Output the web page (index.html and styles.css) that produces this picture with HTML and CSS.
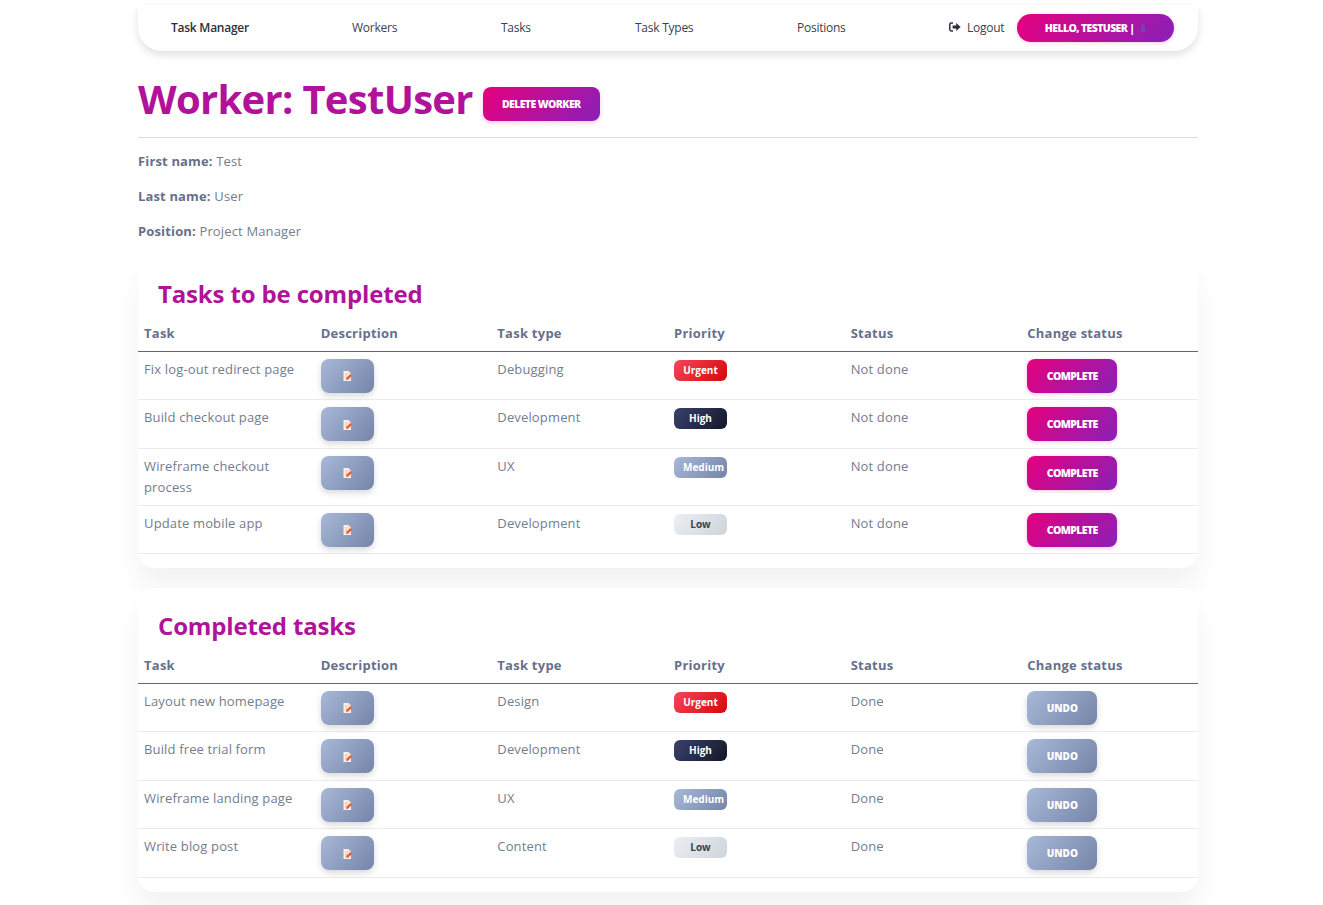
FILE: index.html
```html
<!DOCTYPE html>
<html lang="en">
<head>
    <meta charset="UTF-8">
    <meta name="viewport" content="width=device-width, initial-scale=1.0">
    <title>Worker: TestUser</title>
    <link rel="stylesheet" href="styles.css">
</head>
<body>
    <svg class="icon_defs">
        <symbol id="memo" viewBox="0 0 9 10">
            <path d="M.5 0h5L8 2.5V10H.5z" fill="#fbeee6"/>
            <path d="M5.5 0v2.5H8" fill="#f3cdb8"/>
            <path d="M2 3h3M2 5h2M2 7h1.5" stroke="#eab39c" stroke-width=".8"/>
            <path d="M3 9l.6-2.4L7.3 3 9 4.7 5.4 8.4z" fill="#e4603a"/>
        </symbol>
    </svg>

    <div class="container">
        <nav class="navbar">
            <a class="brand" href="#">Task Manager</a>
            <a class="nav_link" href="#">Workers</a>
            <a class="nav_link" href="#">Tasks</a>
            <a class="nav_link" href="#">Task Types</a>
            <a class="nav_link" href="#">Positions</a>
            <a class="logout" href="#">
                <svg class="logout_icon" viewBox="0 0 12 10"><path d="M4 1H2.2C1.3 1 .8 1.6.8 2.4v5.2C.8 8.4 1.3 9 2.2 9H4" fill="none" stroke="#2b2f3a" stroke-width="1.5"/><path d="M3.6 3.6h3.6V1l4.4 4-4.4 4V6.4H3.6z" fill="#2b2f3a"/></svg>
                Logout
            </a>
            <a class="btn btn_pill" href="#">Hello, TestUser | <svg class="hello_icon" viewBox="0 0 6 8"><circle cx="3" cy="2" r="2" fill="#7a3fb0"/><path d="M0 8c0-3 1-4 3-4s3 1 3 4z" fill="#7a3fb0"/></svg></a>
        </nav>

        <div class="page_title">
            <h1>Worker: TestUser</h1>
            <a class="btn btn_delete" href="#">Delete worker</a>
        </div>
        <hr>

        <p class="detail"><b>First name:</b> Test</p>
        <p class="detail"><b>Last name:</b> User</p>
        <p class="detail"><b>Position:</b> Project Manager</p>

        <section class="card">
            <h2>Tasks to be completed</h2>
            <table>
                <thead>
                    <tr><th>Task</th><th>Description</th><th>Task type</th><th>Priority</th><th>Status</th><th>Change status</th></tr>
                </thead>
                <tbody>
                    <tr>
                        <td>Fix log-out redirect page</td>
                        <td><a class="btn btn_desc" href="#"><svg class="memo"><use href="#memo"/></svg></a></td>
                        <td>Debugging</td>
                        <td><span class="badge urgent">Urgent</span></td>
                        <td>Not done</td>
                        <td><a class="btn btn_complete" href="#">Complete</a></td>
                    </tr>
                    <tr>
                        <td>Build checkout page</td>
                        <td><a class="btn btn_desc" href="#"><svg class="memo"><use href="#memo"/></svg></a></td>
                        <td>Development</td>
                        <td><span class="badge high">High</span></td>
                        <td>Not done</td>
                        <td><a class="btn btn_complete" href="#">Complete</a></td>
                    </tr>
                    <tr>
                        <td>Wireframe checkout process</td>
                        <td><a class="btn btn_desc" href="#"><svg class="memo"><use href="#memo"/></svg></a></td>
                        <td>UX</td>
                        <td><span class="badge medium">Medium</span></td>
                        <td>Not done</td>
                        <td><a class="btn btn_complete" href="#">Complete</a></td>
                    </tr>
                    <tr>
                        <td>Update mobile app</td>
                        <td><a class="btn btn_desc" href="#"><svg class="memo"><use href="#memo"/></svg></a></td>
                        <td>Development</td>
                        <td><span class="badge low">Low</span></td>
                        <td>Not done</td>
                        <td><a class="btn btn_complete" href="#">Complete</a></td>
                    </tr>
                </tbody>
            </table>
        </section>

        <section class="card">
            <h2>Completed tasks</h2>
            <table>
                <thead>
                    <tr><th>Task</th><th>Description</th><th>Task type</th><th>Priority</th><th>Status</th><th>Change status</th></tr>
                </thead>
                <tbody>
                    <tr>
                        <td>Layout new homepage</td>
                        <td><a class="btn btn_desc" href="#"><svg class="memo"><use href="#memo"/></svg></a></td>
                        <td>Design</td>
                        <td><span class="badge urgent">Urgent</span></td>
                        <td>Done</td>
                        <td><a class="btn btn_undo" href="#">Undo</a></td>
                    </tr>
                    <tr>
                        <td>Build free trial form</td>
                        <td><a class="btn btn_desc" href="#"><svg class="memo"><use href="#memo"/></svg></a></td>
                        <td>Development</td>
                        <td><span class="badge high">High</span></td>
                        <td>Done</td>
                        <td><a class="btn btn_undo" href="#">Undo</a></td>
                    </tr>
                    <tr>
                        <td>Wireframe landing page</td>
                        <td><a class="btn btn_desc" href="#"><svg class="memo"><use href="#memo"/></svg></a></td>
                        <td>UX</td>
                        <td><span class="badge medium">Medium</span></td>
                        <td>Done</td>
                        <td><a class="btn btn_undo" href="#">Undo</a></td>
                    </tr>
                    <tr>
                        <td>Write blog post</td>
                        <td><a class="btn btn_desc" href="#"><svg class="memo"><use href="#memo"/></svg></a></td>
                        <td>Content</td>
                        <td><span class="badge low">Low</span></td>
                        <td>Done</td>
                        <td><a class="btn btn_undo" href="#">Undo</a></td>
                    </tr>
                </tbody>
            </table>
        </section>
    </div>
</body>
</html>
```

FILE: styles.css
```css
*{
    margin: 0;
    padding: 0;
    box-sizing: border-box;
}

body{
    background-color: #fff;
    font-family: "Open Sans", sans-serif;
    font-size: 13px;
    color: #737d90;
    height: 905px;
    overflow: hidden;
}

a{
    text-decoration: none;
}

b{
    color: #67708a;
}

.icon_defs{
    display: none;
}

.container{
    width: 1060px;
    margin-left: 138px;
}

.navbar{
    display: flex;
    align-items: center;
    height: 46px;
    margin-top: 5px;
    padding: 0 24px 2px 33px;
    background-color: #fff;
    border-radius: 0 0 24px 24px;
    box-shadow: 0 4px 8px rgba(0, 0, 0, 0.12);
    font-size: 12px;
    letter-spacing: -0.25px;
    color: #2b2f3a;
}

.brand{
    width: 181px;
    font-weight: 600;
    color: #2b2f3a;
}

.nav_link{
    color: #3a3f4c;
}

.nav_link:nth-child(2){
    width: 149px;
}

.nav_link:nth-child(3){
    width: 134px;
}

.nav_link:nth-child(4){
    width: 162px;
}

.nav_link:nth-child(5){
    width: 152px;
}

.logout{
    display: flex;
    align-items: center;
    gap: 6px;
    width: 68px;
    color: #3a3f4c;
}

.logout_icon{
    width: 12px;
    height: 10px;
}

.btn{
    display: inline-flex;
    align-items: center;
    justify-content: center;
    padding-top: 1px;
    font-size: 10.5px;
    font-weight: 800;
    letter-spacing: -0.6px;
    text-transform: uppercase;
    color: #fff;
    border-radius: 8px;
}

.btn_pill{
    width: 157px;
    height: 28px;
    margin-top: 2px;
    padding-top: 0;
    gap: 3px;
    border-radius: 14px;
    background-image: linear-gradient(310deg, #8a20b8, #e6007e);
    box-shadow: 0 1px 4px rgba(225, 0, 130, 0.2);
}

.hello_icon{
    width: 6px;
    height: 8px;
    margin-left: 3px;
}

.page_title{
    display: flex;
    align-items: center;
    margin-top: 22px;
    height: 52px;
}

h1{
    font-size: 40px;
    font-weight: 700;
    line-height: 52px;
    letter-spacing: -0.7px;
    color: #b0129a;
}

.btn_delete{
    width: 117px;
    height: 34px;
    margin-left: 10px;
    margin-top: 10px;
    padding-top: 0;
    background-image: linear-gradient(310deg, #8a20b8, #e6007e);
    box-shadow: 0 2px 5px rgba(225, 0, 130, 0.2);
}

hr{
    border: none;
    border-top: 1px solid #ddd;
    margin-top: 12px;
    margin-bottom: 13px;
}

.detail{
    height: 35px;
    line-height: 20px;
    letter-spacing: 0.15px;
}

.card{
    padding-top: 15px;
    padding-bottom: 14px;
    background-color: #fff;
    border-radius: 16px;
    box-shadow: 0 20px 27px rgba(0, 0, 0, 0.05);
}

.card + .card{
    margin-top: 19.6px;
}

h2{
    padding-left: 20px;
    padding-top: 1px;
    font-size: 24px;
    font-weight: 700;
    line-height: 43px;
    letter-spacing: -0.15px;
    color: #b0129a;
}

table{
    width: 100%;
    table-layout: fixed;
    border-collapse: collapse;
}

th{
    padding: 9px 6px 8.8px;
    font-size: 13px;
    font-weight: 700;
    line-height: 18px;
    text-align: left;
    letter-spacing: 0.25px;
    color: #67708a;
    border-bottom: 1px solid #666;
}

td{
    padding: 7px 6px 6.6px;
    line-height: 21px;
    vertical-align: top;
    letter-spacing: 0.15px;
    border-bottom: 1px solid #e9ecef;
}

.btn_desc{
    width: 53px;
    height: 34px;
    vertical-align: top;
    background-image: linear-gradient(310deg, #7485a8, #a8b8d8);
    box-shadow: 0 3px 6px rgba(0, 0, 0, 0.15);
}

.memo{
    width: 9px;
    height: 10px;
    margin-left: 1px;
}

.btn_complete{
    width: 90px;
    height: 34px;
    vertical-align: top;
    background-image: linear-gradient(310deg, #8a20b8, #e6007e);
    box-shadow: 0 1px 4px rgba(225, 0, 130, 0.25);
}

.btn_undo{
    width: 70px;
    height: 34px;
    vertical-align: top;
    font-size: 10px;
    letter-spacing: 0;
    background-image: linear-gradient(310deg, #7485a8, #a8b8d8);
    box-shadow: 0 3px 6px rgba(0, 0, 0, 0.15);
}

.badge{
    display: inline-block;
    width: 53px;
    height: 21px;
    margin-top: 1px;
    padding: 0 9px;
    border-radius: 6px;
    font-size: 10px;
    font-weight: 700;
    line-height: 21px;
    text-align: center;
    white-space: nowrap;
    vertical-align: top;
    letter-spacing: 0;
    color: #fff;
}

.urgent{
    background-image: linear-gradient(310deg, #d60808, #f5455c);
}

.high{
    background-image: linear-gradient(310deg, #141727, #3a416f);
}

.medium{
    background-image: linear-gradient(310deg, #7485a8, #a8b8d8);
}

.low{
    background-image: linear-gradient(310deg, #ced4da, #ebeff4);
    color: #3a3f4c;
}
```
